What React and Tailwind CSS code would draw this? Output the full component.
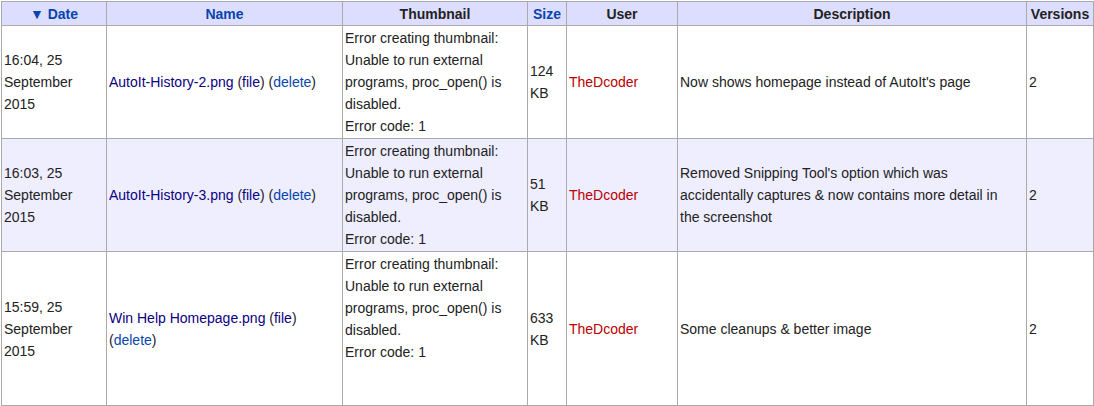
import React from 'react'

const rows = [
  {
    date: ['16:04, 25', 'September', '2015'],
    name: 'AutoIt-History-2.png',
    wrapDelete: false,
    size: ['124', 'KB'],
    desc: "Now shows homepage instead of AutoIt's page",
    alt: false,
    extra: false,
  },
  {
    date: ['16:03, 25', 'September', '2015'],
    name: 'AutoIt-History-3.png',
    wrapDelete: false,
    size: ['51', 'KB'],
    desc: "Removed Snipping Tool's option which was accidentally captures & now contains more detail in the screenshot",
    alt: true,
    extra: false,
  },
  {
    date: ['15:59, 25', 'September', '2015'],
    name: 'Win Help Homepage.png',
    wrapDelete: true,
    size: ['633', 'KB'],
    desc: 'Some cleanups & better image',
    alt: false,
    extra: true,
  },
]

const cell = 'border border-[#aaaaaa] pl-[2px] pr-[2px] py-[1px] align-middle'
const head = 'border border-[#aaaaaa] px-[2px] pt-[1px] pb-0 text-center font-bold'

export default function App() {
  return (
    <div className="bg-white pl-[1px] pt-[1px] font-['Liberation_Sans',Arial,sans-serif] text-[14px] leading-[22px] text-[#222222]">
      <table className="w-[1092px] table-fixed border-collapse">
        <colgroup>
          <col className="w-[105px]" />
          <col className="w-[236px]" />
          <col className="w-[185px]" />
          <col className="w-[39px]" />
          <col className="w-[111px]" />
          <col className="w-[349px]" />
          <col className="w-[67px]" />
        </colgroup>
        <thead>
          <tr className="bg-[#ddddff]">
            <th className={`${head} text-[#0645ad]`}>▼ Date</th>
            <th className={`${head} text-[#0645ad]`}>Name</th>
            <th className={head}>Thumbnail</th>
            <th className={`${head} text-[#0645ad]`}>Size</th>
            <th className={head}>User</th>
            <th className={head}>Description</th>
            <th className={`${head} whitespace-nowrap`}>Versions</th>
          </tr>
        </thead>
        <tbody>
          {rows.map(r => (
            <tr key={r.name} className={r.alt ? 'bg-[#eeeeff]' : 'bg-white'}>
              <td className={cell}>
                {r.date.map(d => <div key={d}>{d}</div>)}
              </td>
              <td className={cell}>
                <span className="text-[#0b0080]">{r.name}</span> (<span className="text-[#0b0080]">file</span>)
                {r.wrapDelete ? <br /> : ' '}
                (<span className="text-[#0645ad]">delete</span>)
              </td>
              <td className={cell}>
                <div>Error creating thumbnail: Unable to run external programs, proc_open() is disabled.</div>
                <div>Error code: 1</div>
                {r.extra && <div className="h-[41px]" />}
              </td>
              <td className={cell}>
                {r.size.map(s => <div key={s}>{s}</div>)}
              </td>
              <td className={`${cell} text-[#ba0000]`}>TheDcoder</td>
              <td className={`${cell} pr-[10px]`}>{r.desc}</td>
              <td className={cell}>2</td>
            </tr>
          ))}
        </tbody>
      </table>
    </div>
  )
}
